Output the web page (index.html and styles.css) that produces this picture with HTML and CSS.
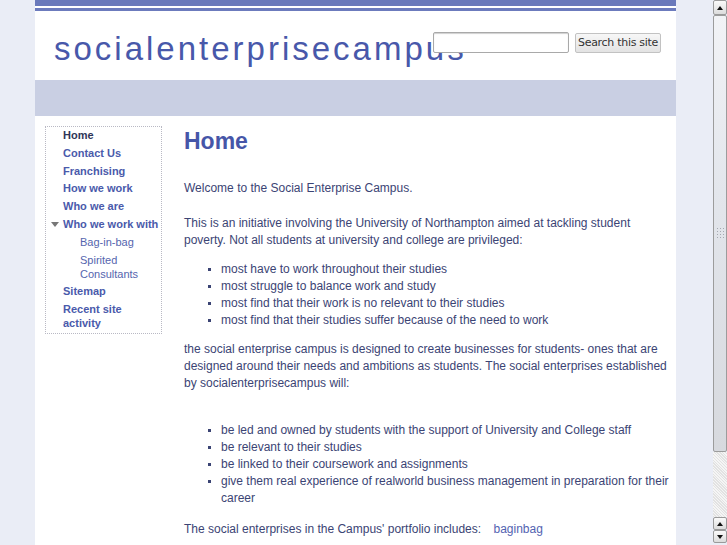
FILE: index.html
```html
<!DOCTYPE html>
<html>
<head>
<meta charset="utf-8">
<title>socialenterprisecampus</title>
<link rel="stylesheet" href="styles.css">
</head>
<body>
<div class="page">
  <div class="wrap">
    <div class="topbar"></div>
    <div class="topline"></div>
    <div class="header">
      <div class="site-title">socialenterprisecampus</div>
      <form class="search">
        <input class="search-input" type="text">
        <button class="search-btn" type="button">Search this site</button>
      </form>
    </div>
    <div class="band"></div>
    <div class="main">
      <nav class="sidebar">
        <a class="nav-item current">Home</a>
        <a class="nav-item">Contact Us</a>
        <a class="nav-item">Franchising</a>
        <a class="nav-item">How we work</a>
        <a class="nav-item">Who we are</a>
        <a class="nav-item expanded"><span class="tri"></span>Who we work with</a>
        <a class="nav-sub">Bag-in-bag</a>
        <a class="nav-sub">Spirited Consultants</a>
        <a class="nav-item">Sitemap</a>
        <a class="nav-item">Recent site activity</a>
      </nav>
      <div class="content">
        <h1 class="page-title">Home</h1>
        <p class="para p-first">Welcome to the Social Enterprise Campus.</p>
        <p class="para p-gap">This is an initiative involving the University of Northampton aimed at tackling student poverty. Not all students at university and college are privileged:</p>
        <ul class="list">
          <li>most have to work throughout their studies</li>
          <li>most struggle to balance work and study</li>
          <li>most find that their work is no relevant to their studies</li>
          <li>most find that their studies suffer because of the need to work</li>
        </ul>
        <p class="para">the social enterprise campus is designed to create businesses for students- ones that are designed around their needs and ambitions as students. The social enterprises established by socialenterprisecampus will:</p>
        <ul class="list list-wide">
          <li>be led and owned by students with the support of University and College staff</li>
          <li>be relevant to their studies</li>
          <li>be linked to their coursework and assignments</li>
          <li>give them real experience of realworld business management in preparation for their career</li>
        </ul>
        <p class="para">The social enterprises in the Campus' portfolio includes: <a class="link">baginbag</a></p>
      </div>
    </div>
  </div>
</div>
<div class="scrollbar">
  <div class="sb-btn sb-top"><span class="arr-up"></span></div>
  <div class="sb-thumb"><span class="grip"></span></div>
  <div class="sb-track"></div>
  <div class="sb-btn sb-small"><span class="arr-up"></span></div>
  <div class="sb-btn sb-small"><span class="arr-down"></span></div>
  <div class="sb-end"></div>
</div>
</body>
</html>
```
FILE: styles.css
```css
html, body {
  margin: 0;
  padding: 0;
  height: 545px;
  overflow: hidden;
}
body {
  display: flex;
  background: #eaedf6;
  font-family: "Liberation Sans", Arial, sans-serif;
  color: #3b4474;
}
.page {
  flex: 1;
  height: 545px;
  overflow: hidden;
}
.wrap {
  width: 641px;
  margin: 0 auto;
  background: #ffffff;
  min-height: 545px;
}
.topbar {
  height: 6px;
  background: #6a79bb;
}
.topline {
  height: 3px;
  margin-top: 2px;
  background: #6c7bbd;
}
.header {
  position: relative;
  height: 69px;
}
.site-title {
  padding: 19px 0 0 19px;
  font-size: 33px;
  line-height: 38px;
  letter-spacing: 3px;
  color: #4858aa;
}
.search {
  position: absolute;
  top: 21px;
  left: 398px;
  display: flex;
  align-items: center;
  margin: 0;
}
.search-input {
  width: 130px;
  height: 17px;
  margin: 0;
  padding: 1px 2px;
  border: 1px solid #a9a9a9;
  border-radius: 2px;
  box-shadow: inset 0 1px 1px #d0d0d0;
  background: #fff;
}
.search-btn {
  margin-left: 6px;
  height: 20px;
  width: 86px;
  padding: 0;
  border: 1px solid #c2c2c2;
  border-radius: 2px;
  background: linear-gradient(#f7f7f7, #e3e3e3);
  font-family: "DejaVu Sans", sans-serif;
  font-size: 11px;
  color: #333;
  letter-spacing: -0.3px;
}
.band {
  height: 36px;
  background: #c9cfe3;
}
.main {
  display: flex;
  align-items: flex-start;
  padding: 10px 0 0 10px;
}
.sidebar {
  width: 115px;
  border: 1px dotted #b9b9c4;
  padding: 1px 0 3px 0;
  display: flex;
  flex-direction: column;
  gap: 3.8px;
  font-size: 11px;
  line-height: 14px;
}
.nav-item {
  display: block;
  padding-left: 17px;
  font-weight: bold;
  color: #4a5aab;
  position: relative;
}
.nav-item.current {
  color: #2f3658;
}
.nav-sub {
  display: block;
  padding-left: 34px;
  color: #5565ae;
}
.tri {
  position: absolute;
  left: 5px;
  top: 5px;
  width: 0;
  height: 0;
  border-left: 4px solid transparent;
  border-right: 4px solid transparent;
  border-top: 5px solid #777;
}
.content {
  flex: 1;
  padding: 0 4px 0 22px;
  font-size: 12px;
  line-height: 17px;
}
.page-title {
  margin: 0;
  padding-top: 1px;
  font-size: 23px;
  line-height: 28px;
  font-weight: bold;
  color: #4656a8;
}
.para {
  margin: 12px 0 0 0;
}
.p-first {
  margin-top: 25px;
}
.p-gap {
  margin-top: 18px;
}
.list {
  margin: 12px 0 0 0;
  padding-left: 37px;
  list-style: square;
}
.list li::marker {
  font-size: 10px;
}
.list-wide {
  margin-top: 30px;
}
.list-wide + .para {
  margin-top: 14px;
}
.link {
  margin-left: 9px;
  color: #5363b1;
}
.scrollbar {
  width: 16px;
  height: 545px;
  display: flex;
  flex-direction: column;
  background: #eaedf6;
  box-sizing: border-box;
  padding-left: 2px;
}
.sb-btn {
  box-sizing: border-box;
  border: 1px solid #9a9a9a;
  border-radius: 2px;
  background: linear-gradient(#fafafa, #dcdcdc);
  display: flex;
  align-items: center;
  justify-content: center;
}
.sb-top {
  height: 15px;
}
.sb-small {
  height: 13px;
}
.arr-up {
  width: 0;
  height: 0;
  border-left: 3px solid transparent;
  border-right: 3px solid transparent;
  border-bottom: 4px solid #111;
}
.arr-down {
  width: 0;
  height: 0;
  border-left: 3px solid transparent;
  border-right: 3px solid transparent;
  border-top: 4px solid #111;
}
.sb-thumb {
  height: 437px;
  box-sizing: border-box;
  border: 1px solid #9c9c9c;
  border-radius: 2px;
  background: linear-gradient(#f2f3f6, #e3e6ec 40%, #d7d9de);
  display: flex;
  align-items: center;
  justify-content: center;
}
.grip {
  width: 8px;
  height: 13px;
  background-image: radial-gradient(circle, #a5a8b0 0.8px, transparent 1px);
  background-size: 3px 3px;
}
.sb-track {
  height: 65px;
  background-color: #eeeeee;
  background-image: repeating-linear-gradient(45deg, #e2e2e2 0 1px, #f5f5f5 1px 2px);
}
.sb-end {
  flex: 1;
}
```
